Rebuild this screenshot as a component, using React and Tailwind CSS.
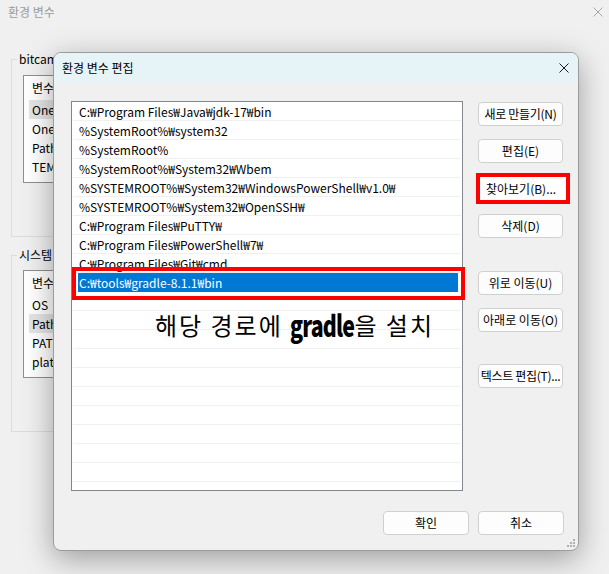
import React from 'react'

const paths = [
  'C:₩Program Files₩Java₩jdk-17₩bin',
  '%SystemRoot%₩system32',
  '%SystemRoot%',
  '%SystemRoot%₩System32₩Wbem',
  '%SYSTEMROOT%₩System32₩WindowsPowerShell₩v1.0₩',
  '%SYSTEMROOT%₩System32₩OpenSSH₩',
  'C:₩Program Files₩PuTTY₩',
  'C:₩Program Files₩PowerShell₩7₩',
  'C:₩Program Files₩Git₩cmd',
  'C:₩tools₩gradle-8.1.1₩bin',
  '', '', '', '', '', '', '', '', '', '', ''
]

const userVars = ['OneDrive', 'OneDriveConsumer', 'Path', 'TEMP']
const sysVars = ['OS', 'Path', 'PATHEXT', 'platformcode']

function CloseIcon({ color = '#1a1a1a' }) {
  return (
    <svg width="10" height="10" viewBox="0 0 10 10">
      <path d="M0.5 0.5 L9.5 9.5 M9.5 0.5 L0.5 9.5" stroke={color} strokeWidth="1" fill="none" />
    </svg>
  )
}

function Btn({ children, className = '' }) {
  return (
    <div
      className={`h-[24px] flex items-center justify-center rounded-[4px] border border-[#d0d0d0] bg-[#fdfdfd] text-[12px] leading-none text-black whitespace-nowrap ${className}`}
    >
      {children}
    </div>
  )
}

// 배경 창의 변수 목록
function VarList({ items, selected }) {
  return (
    <div className="w-[520px] h-[108px] border border-[#8f8f8f] bg-white overflow-hidden">
      <div className="h-[24px] flex items-center pl-[8px] text-[12px]">변수</div>
      {items.map(name => (
        <div
          key={name}
          className={`h-[19px] mx-[5px] pl-[3px] flex items-center text-[12px] ${
            name === selected ? 'bg-[#e5e5e5]' : ''
          }`}
        >
          {name}
        </div>
      ))}
    </div>
  )
}

export default function App() {
  return (
    <div className="relative w-[609px] h-[574px] overflow-hidden bg-[#f0f0f0] text-black font-['Noto_Sans_CJK_KR',sans-serif]">
      {/* ================= 배경 창: 환경 변수 ================= */}
      <div className="h-[24px] flex items-center justify-between pl-[8px] pr-[6px] text-[12px] text-[#9b9b9b]">
        <span>환경 변수</span>
        <CloseIcon color="#a8a8a8" />
      </div>

      <fieldset className="mt-[27px] ml-[11px] w-[545px] border border-[#dcdcdc] px-[11px] pt-[8px] pb-[53px]">
        <legend className="-ml-[6px] px-[2px] text-[12px] leading-[16px]">bitcamp에 대한 사용자 변수(U)</legend>
        <VarList items={userVars} selected="OneDrive" />
      </fieldset>

      <fieldset className="mt-[10px] ml-[11px] w-[545px] border border-[#dcdcdc] px-[11px] pt-[7px] pb-[53px]">
        <legend className="-ml-[6px] px-[2px] text-[12px] leading-[16px]">시스템 변수(S)</legend>
        <VarList items={sysVars} selected="Path" />
      </fieldset>

      {/* ================= 대화상자: 환경 변수 편집 ================= */}
      <div className="absolute left-[53px] top-[52px] w-[526px] h-[499px] rounded-[8px] border border-[#9c9c9c] bg-[#f0f0f0] overflow-hidden shadow-[0_8px_30px_rgba(0,0,0,0.35)]">
        <div className="h-[29px] flex items-center justify-between pl-[8px] pr-[9px] bg-[#e7f4f7] text-[12px]">
          <span>환경 변수 편집</span>
          <CloseIcon />
        </div>

        <div className="flex pl-[17px] pt-[19px]">
          {/* 경로 리스트 */}
          <div className="relative w-[392px] h-[390px] border border-[#82878f] bg-white">
            <div className="h-full overflow-hidden">
              {paths.map((p, i) => (
                <div key={i} className="h-[19px] mx-[1px] border-b border-[#f0f0f0]">
                  <div
                    className={`h-[19px] ml-[5px] mr-[3px] pl-[1px] flex items-center text-[12px] whitespace-nowrap ${
                      i === 9 ? 'bg-[#0078d4] text-white' : ''
                    }`}
                  >
                    {p}
                  </div>
                </div>
              ))}
            </div>

            {/* 표시: 빨간 박스 + 안내 문구 */}
            <div className="absolute left-[0px] top-[165px] w-[393px] h-[33px] border-4 border-[#ff0000]" />
            <div className="absolute left-[83px] top-[209px] flex items-center text-[24px] leading-[28px] tracking-[2px] whitespace-nowrap">
              <span>해당 경로에&nbsp;</span>
              <span className="inline-block origin-left scale-x-[0.82] scale-y-[1.12] -mr-[14px] font-black text-[26px] tracking-[-1px]">
                gradle
              </span>
              <span>을 설치</span>
            </div>
          </div>

          {/* 버튼 */}
          <div className="flex flex-col ml-[15px] pt-[1px]">
            <Btn className="w-[85px] tracking-[-0.3px]">새로 만들기(N)</Btn>
            <Btn className="w-[85px] mt-[13px]">편집(E)</Btn>
            <div className="w-[94px] h-[31px] mt-[10px] -ml-[2px] border-4 border-[#ff0000] bg-white flex items-center pl-[6px] text-[12px] whitespace-nowrap">
              찾아보기(B)...
            </div>
            <Btn className="w-[85px] mt-[10px]">삭제(D)</Btn>
            <Btn className="w-[85px] mt-[33px]">위로 이동(U)</Btn>
            <Btn className="w-[85px] mt-[13px]">아래로 이동(O)</Btn>
            <Btn className="w-[85px] mt-[32px] tracking-[-0.3px]">텍스트 편집(T)...</Btn>
          </div>
        </div>

        <div className="flex justify-end gap-[9px] pr-[14px] mt-[20px]">
          <Btn className="w-[86px] border-[#0067c0]">확인</Btn>
          <Btn className="w-[86px]">취소</Btn>
        </div>

        <svg className="absolute right-[3px] bottom-[3px]" width="8" height="8" viewBox="0 0 8 8">
          <g fill="#b0b0b0">
            <rect x="6" y="0" width="2" height="2" />
            <rect x="3" y="3" width="2" height="2" />
            <rect x="6" y="3" width="2" height="2" />
            <rect x="0" y="6" width="2" height="2" />
            <rect x="3" y="6" width="2" height="2" />
            <rect x="6" y="6" width="2" height="2" />
          </g>
        </svg>
      </div>
    </div>
  )
}
